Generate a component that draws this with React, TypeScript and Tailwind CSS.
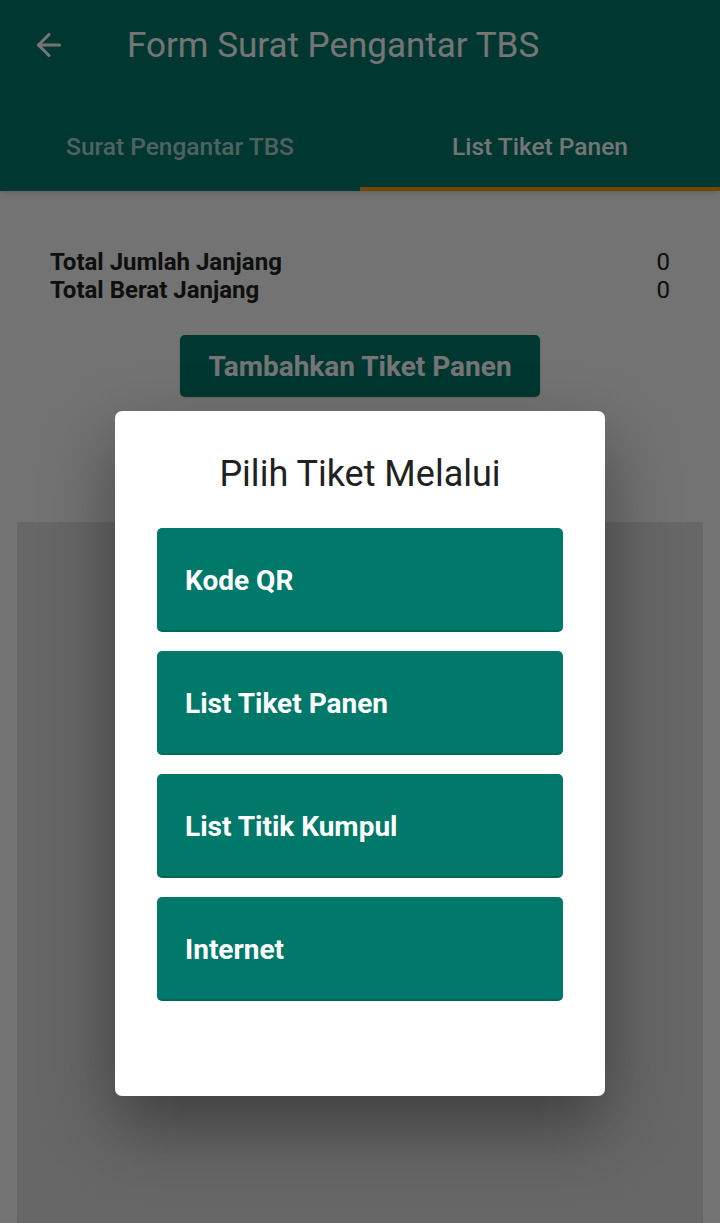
import { ArrowLeft } from "lucide-react";

const options = ["Kode QR", "List Tiket Panen", "List Titik Kumpul", "Internet"];

export default function App() {
  return (
    <div className="relative h-[1223px] w-full overflow-hidden bg-[#fafafa] font-['Roboto',sans-serif]">
      {/* app bar */}
      <header className="bg-[#00796b] text-white shadow-md">
        <div className="flex h-[90px] items-center">
          <ArrowLeft className="ml-[31px] h-[36px] w-[36px]" strokeWidth={2.1} />
          <h1 className="ml-[60px] text-[35px] leading-none">Form Surat Pengantar TBS</h1>
        </div>
        <nav className="flex h-[101px]">
          <div className="flex flex-1 items-center justify-center border-b-[4px] border-transparent pt-[18px] text-[24.5px] font-medium text-white/70">
            Surat Pengantar TBS
          </div>
          <div className="flex flex-1 items-center justify-center border-b-[4px] border-[#ff9800] pt-[18px] text-[24.5px] font-medium">
            List Tiket Panen
          </div>
        </nav>
      </header>

      {/* page body */}
      <main className="flex flex-col">
        <div className="mt-[57px] px-[50px] text-[24px] font-bold leading-[28px] text-[#212121]">
          <div className="flex justify-between">
            <span>Total Jumlah Janjang</span>
            <span className="font-normal">0</span>
          </div>
          <div className="flex justify-between">
            <span>Total Berat Janjang</span>
            <span className="font-normal">0</span>
          </div>
        </div>
        <div className="mt-[31px] flex justify-center">
          <button className="h-[62px] w-[360px] rounded-[5px] bg-[#00796b] pt-[2px] text-[28px] font-bold text-white shadow">
            Tambahkan Tiket Panen
          </button>
        </div>
        <div className="mx-[17px] mt-[125px] h-[720px] bg-[#e0e0e0]" />
      </main>

      {/* scrim */}
      <div className="absolute inset-0 bg-black/[0.54]" />

      {/* dialog */}
      <div className="absolute left-[115px] top-[411px] w-[490px] rounded-[7px] bg-white px-[42px] pb-[95px] pt-[40px] shadow-[0_30px_70px_rgba(0,0,0,0.4)]">
        <h2 className="text-center text-[36px] leading-[46px] text-[#212121]">Pilih Tiket Melalui</h2>
        <div className="mt-[31px] flex flex-col gap-[19px]">
          {options.map((label) => (
            <button
              key={label}
              className="flex h-[104px] items-center rounded-[5px] border-b-[2px] border-[#00695c] bg-[#00796b] pl-[28px] pt-[3px] text-left text-[28px] font-bold text-white"
            >
              {label}
            </button>
          ))}
        </div>
      </div>
    </div>
  );
}
